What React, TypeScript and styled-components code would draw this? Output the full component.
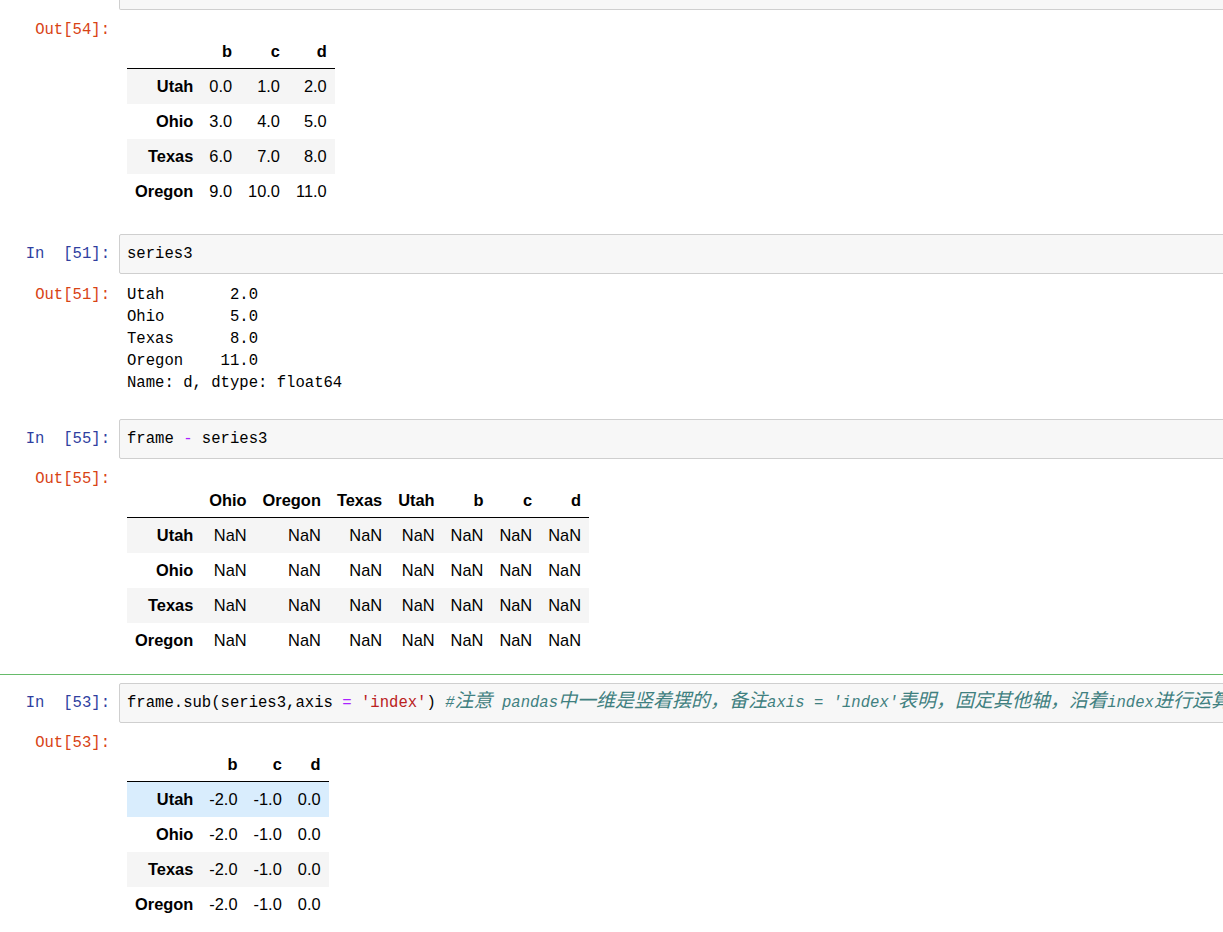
import styled, { createGlobalStyle } from "styled-components";

const GlobalStyle = createGlobalStyle`
  html, body {
    margin: 0;
    padding: 0;
    background: #ffffff;
    overflow: hidden;
  }
`;

const MONO = `"Liberation Mono", "DejaVu Sans Mono", "Noto Sans CJK SC", monospace`;
const SANS = `"Liberation Sans", Arial, sans-serif`;

type Frame = {
  columns: string[];
  rows: { index: string; values: string[] }[];
  hoverRow?: number;
};

const frame54: Frame = {
  columns: ["b", "c", "d"],
  rows: [
    { index: "Utah", values: ["0.0", "1.0", "2.0"] },
    { index: "Ohio", values: ["3.0", "4.0", "5.0"] },
    { index: "Texas", values: ["6.0", "7.0", "8.0"] },
    { index: "Oregon", values: ["9.0", "10.0", "11.0"] },
  ],
};

const nanRow = Array(7).fill("NaN");
const frame55: Frame = {
  columns: ["Ohio", "Oregon", "Texas", "Utah", "b", "c", "d"],
  rows: ["Utah", "Ohio", "Texas", "Oregon"].map((index) => ({ index, values: nanRow })),
};

const frame53: Frame = {
  columns: ["b", "c", "d"],
  rows: ["Utah", "Ohio", "Texas", "Oregon"].map((index) => ({ index, values: ["-2.0", "-1.0", "0.0"] })),
  hoverRow: 0,
};

export default function App() {
  return (
    <>
      <GlobalStyle />
      <Notebook>
        {/* previous cell, only its bottom edge is visible */}
        <Cell $first>
          <Row>
            <Prompt $kind="in"></Prompt>
            <StubBox />
          </Row>
          <OutputRow>
            <Prompt $kind="out">Out[54]:</Prompt>
            <OutputArea>
              <DataFrame frame={frame54} />
            </OutputArea>
          </OutputRow>
        </Cell>

        <Cell>
          <Row>
            <Prompt $kind="in">In  [51]:</Prompt>
            <InputBox>series3</InputBox>
          </Row>
          <OutputRow $stream>
            <Prompt $kind="out">Out[51]:</Prompt>
            <OutputArea>
              <Stream>
                {`Utah       2.0
Ohio       5.0
Texas      8.0
Oregon    11.0
Name: d, dtype: float64`}
              </Stream>
            </OutputArea>
          </OutputRow>
        </Cell>

        <Cell>
          <Row>
            <Prompt $kind="in">In  [55]:</Prompt>
            <InputBox>
              frame <Op>-</Op> series3
            </InputBox>
          </Row>
          <OutputRow>
            <Prompt $kind="out">Out[55]:</Prompt>
            <OutputArea>
              <DataFrame frame={frame55} />
            </OutputArea>
          </OutputRow>
        </Cell>

        <Cell $selected>
          <Row>
            <Prompt $kind="in">In  [53]:</Prompt>
            <InputBox>
              frame.sub(series3,axis <Op>=</Op> <Str>'index'</Str>){" "}
              <Comment>
                #<Cjk>注意</Cjk> pandas<Cjk>中一维是竖着摆的，备注</Cjk>axis = 'index'<Cjk>表明，固定其他轴，沿着</Cjk>index
                <Cjk>进行运算</Cjk>
              </Comment>
            </InputBox>
          </Row>
          <OutputRow>
            <Prompt $kind="out">Out[53]:</Prompt>
            <OutputArea>
              <DataFrame frame={frame53} />
            </OutputArea>
          </OutputRow>
        </Cell>
      </Notebook>
    </>
  );
}

function DataFrame({ frame }: { frame: Frame }) {
  return (
    <Table>
      <thead>
        <tr>
          <HeadCell></HeadCell>
          {frame.columns.map((c) => (
            <HeadCell key={c}>{c}</HeadCell>
          ))}
        </tr>
      </thead>
      <tbody>
        {frame.rows.map((r, i) => (
          <BodyRow key={r.index} $striped={i % 2 === 0} $hover={frame.hoverRow === i}>
            <IndexCell>{r.index}</IndexCell>
            {r.values.map((v, j) => (
              <ValueCell key={j}>{v}</ValueCell>
            ))}
          </BodyRow>
        ))}
      </tbody>
    </Table>
  );
}

const Notebook = styled.div`
  width: 1260px;
`;

const Cell = styled.div<{ $selected?: boolean; $first?: boolean }>`
  border-top: 1px solid ${(p) => (p.$selected ? "#66bb6a" : "transparent")};
  padding-top: ${(p) => (p.$first ? "0" : "8px")};
  ${(p) => p.$first && "border-top: none;"}
`;

const Row = styled.div`
  display: flex;
  align-items: flex-start;
`;

const OutputRow = styled(Row)<{ $stream?: boolean }>`
  margin-top: ${(p) => (p.$stream ? "9px" : "8px")};
`;

const Prompt = styled.div<{ $kind: "in" | "out" }>`
  flex: 0 0 119px;
  box-sizing: border-box;
  padding-right: 9px;
  padding-top: ${(p) => (p.$kind === "in" ? "10px" : "1px")};
  text-align: right;
  white-space: pre;
  font-family: ${MONO};
  font-size: 15.6px;
  line-height: ${(p) => (p.$kind === "in" ? "20px" : "22px")};
  color: ${(p) => (p.$kind === "in" ? "#303f9f" : "#d84315")};
`;

const InputBox = styled.div`
  flex: 1;
  min-width: 0;
  background: #f7f7f7;
  border: 1px solid #cfcfcf;
  border-radius: 2px;
  padding: 9px 7px;
  font-family: ${MONO};
  font-size: 15.6px;
  line-height: 20px;
  height: 20px;
  color: #000000;
  white-space: pre;
  overflow: hidden;
`;

const StubBox = styled.div`
  flex: 1;
  height: 9px;
  background: #f7f7f7;
  border: 1px solid #cfcfcf;
  border-top: none;
  border-radius: 0 0 2px 2px;
`;

const Op = styled.span`
  color: #aa22ff;
`;

const Str = styled.span`
  color: #ba2121;
`;

const Comment = styled.span`
  color: #408080;
  font-style: italic;
`;

const Cjk = styled.span`
  font-family: "Noto Sans CJK SC", sans-serif;
  font-size: 19px;
  line-height: 0;
`;

const OutputArea = styled.div`
  flex: 1;
  padding-left: 8px;
`;

const Stream = styled.pre`
  margin: 0;
  padding-top: 1px;
  padding-bottom: 16px;
  font-family: ${MONO};
  font-size: 15.6px;
  line-height: 22px;
  color: #000000;
`;

const Table = styled.table`
  border-collapse: collapse;
  border-spacing: 0;
  margin: 16px 0 16px 0;
  font-family: ${SANS};
  font-size: 16.4px;
  color: #000000;

  thead {
    border-bottom: 1px solid #000000;
  }
`;

const HeadCell = styled.th`
  padding: 8px 8px;
  line-height: 18px;
  text-align: right;
  font-weight: bold;
  white-space: nowrap;
`;

const BodyRow = styled.tr<{ $striped: boolean; $hover: boolean }>`
  background: ${(p) => (p.$hover ? "#d9edfd" : p.$striped ? "#f5f5f5" : "transparent")};
`;

const IndexCell = styled.th`
  padding: 8px 8px;
  line-height: 19px;
  text-align: right;
  font-weight: bold;
  white-space: nowrap;
`;

const ValueCell = styled.td`
  padding: 8px 8px;
  line-height: 19px;
  text-align: right;
  white-space: nowrap;
`;
